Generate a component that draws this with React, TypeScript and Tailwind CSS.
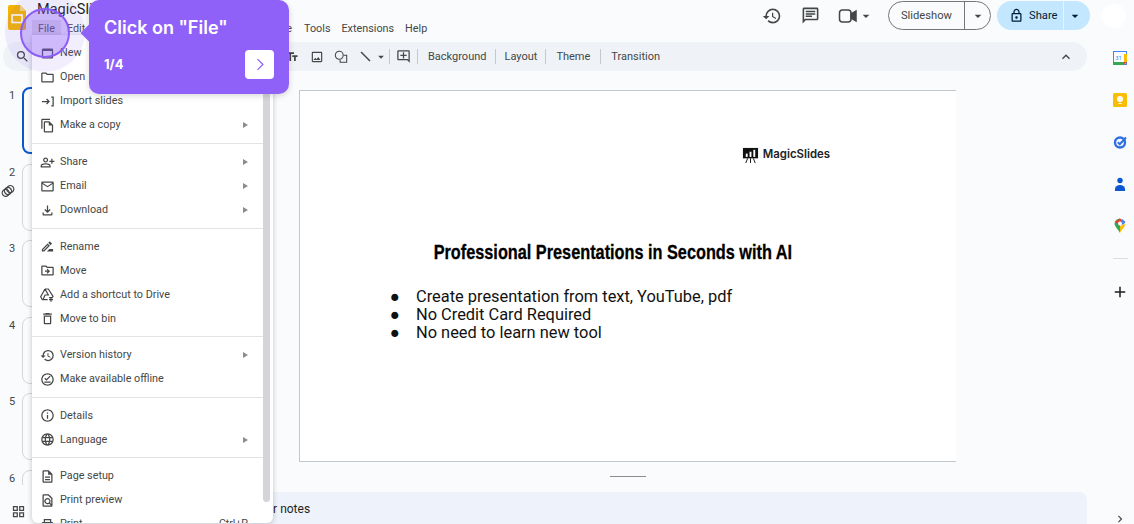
import type { ReactNode } from "react";
import {
  MdAdd,
  MdArrowDropDown,
  MdChevronRight,
  MdHistory,
  MdKeyboardArrowUp,
  MdLanguage,
  MdOutlineAddComment,
  MdOutlineChat,
  MdOutlineDelete,
  MdOutlineDescription,
  MdOutlineDriveFileMove,
  MdOutlineDriveFileRenameOutline,
  MdOutlineEmail,
  MdOutlineFileCopy,
  MdOutlineFileDownload,
  MdOutlineFindInPage,
  MdOutlineFolder,
  MdOutlineGridView,
  MdOutlineImage,
  MdOutlineInfo,
  MdOutlineLock,
  MdOutlineOfflinePin,
  MdOutlinePersonAddAlt,
  MdOutlinePrint,
  MdOutlineWebAsset,
  MdSearch,
  MdTextFields,
} from "react-icons/md";

type Item = { icon: ReactNode; label: string; sub?: boolean; hint?: string };

const ico = "w-[15px] h-[15px]";

function ImportIcon() {
  return (
    <svg viewBox="0 0 24 24" className={ico} fill="none" stroke="currentColor" strokeWidth="2">
      <path d="M3 12h11M10.5 8l4 4-4 4M18 5h3v14h-3" />
    </svg>
  );
}

function ShortcutIcon() {
  return (
    <svg viewBox="0 0 24 24" className="w-[16px] h-[16px]" fill="none" stroke="currentColor" strokeWidth="1.8">
      <path d="M9 3h5l7 11-1 2h-5M9 3L2.5 14.5 5 19h8M9 3l5 9H9l-3 7" />
      <path d="M18 16v6M15 19h6" />
    </svg>
  );
}

const groups: Item[][] = [
  [
    { icon: <MdOutlineWebAsset className={ico} />, label: "New" },
    { icon: <MdOutlineFolder className={ico} />, label: "Open" },
    { icon: <ImportIcon />, label: "Import slides" },
    { icon: <MdOutlineFileCopy className={ico} />, label: "Make a copy", sub: true },
  ],
  [
    { icon: <MdOutlinePersonAddAlt className={ico} />, label: "Share", sub: true },
    { icon: <MdOutlineEmail className={ico} />, label: "Email", sub: true },
    { icon: <MdOutlineFileDownload className={ico} />, label: "Download", sub: true },
  ],
  [
    { icon: <MdOutlineDriveFileRenameOutline className={ico} />, label: "Rename" },
    { icon: <MdOutlineDriveFileMove className={ico} />, label: "Move" },
    { icon: <ShortcutIcon />, label: "Add a shortcut to Drive" },
    { icon: <MdOutlineDelete className={ico} />, label: "Move to bin" },
  ],
  [
    { icon: <MdHistory className={ico} />, label: "Version history", sub: true },
    { icon: <MdOutlineOfflinePin className={ico} />, label: "Make available offline" },
  ],
  [
    { icon: <MdOutlineInfo className={ico} />, label: "Details" },
    { icon: <MdLanguage className={ico} />, label: "Language", sub: true },
  ],
  [
    { icon: <MdOutlineDescription className={ico} />, label: "Page setup" },
    { icon: <MdOutlineFindInPage className={ico} />, label: "Print preview" },
    { icon: <MdOutlinePrint className={ico} />, label: "Print", hint: "Ctrl+P" },
  ],
];

function Sep() {
  return <div className="w-px h-[15px] bg-[#c7c7c7]" />;
}

function FileMenu() {
  return (
    <div className="absolute left-[32px] top-[35px] w-[241px] h-[488px] overflow-hidden bg-white rounded-b-[6px] shadow-[0_1px_5px_rgba(60,64,67,0.3)]">
      <div className="absolute right-[3px] top-0 w-[7px] h-[467px] rounded-full bg-[#d4d5da]" />
      <div className="w-[232px]">
        {groups.map((g, i) => (
          <div key={i} className={i ? "border-t border-[#e3e3e3] pt-[6.25px] pb-[5.25px]" : "pt-[6px] pb-[6px]"}>
            {g.map((it) => (
              <div key={it.label} className="h-[24px] flex items-center pl-[2px] pr-[16px] text-[#444746]">
                <span className="w-[26px] flex justify-center shrink-0">{it.icon}</span>
                <span className="text-[10.8px] flex-1">{it.label}</span>
                {it.sub && <span className="w-0 h-0 border-y-[3px] border-y-transparent border-l-[5px] border-l-[#8a8c8e]" />}
                {it.hint && <span className="text-[10.5px]">{it.hint}</span>}
              </div>
            ))}
          </div>
        ))}
      </div>
    </div>
  );
}

function LinkMark() {
  return (
    <svg viewBox="0 0 14 14" className="w-[14px] h-[14px] mt-[3px] -ml-[8px]" fill="none" stroke="#444746" strokeWidth="1.3">
      <g transform="rotate(-40 7 7)">
        <rect x="0.5" y="3.5" width="7" height="7" rx="3.5" />
        <rect x="3.5" y="3.5" width="7" height="7" rx="3.5" />
        <rect x="6.5" y="3.5" width="7" height="7" rx="3.5" />
      </g>
    </svg>
  );
}

function Thumb({ n, active, linked }: { n: number; active?: boolean; linked?: boolean }) {
  return (
    <div className="h-[76.5px] flex shrink-0">
      <div className="w-[22px] pl-[9px] pt-[1px] text-[11px] text-[#444746]">
        {n}
        {linked && <LinkMark />}
      </div>
      <div className={`w-[240px] h-[67px] rounded-[8px] ${active ? "border-2 border-[#0b57d0]" : "border border-[#d5d7da]"}`} />
    </div>
  );
}

function BulletLine({ text }: { text: string }) {
  return (
    <li className="flex">
      <span className="w-[26px]">●</span>
      {text}
    </li>
  );
}

export default function App() {
  return (
    <div className="relative w-[1134px] h-[524px] overflow-hidden bg-[#f9fbfd] text-[#444746] font-['Roboto',sans-serif]">
      {/* Top bar */}
      <header className="h-[42px] flex">
        <svg viewBox="0 0 18 25" className="w-[18px] h-[25px] ml-[8px] mt-[5px] shrink-0">
          <path d="M2 0h10l6 6v17a2 2 0 0 1-2 2H2a2 2 0 0 1-2-2V2a2 2 0 0 1 2-2z" fill="#f4b400" />
          <path d="M12 0l6 6h-6z" fill="#f8d775" />
          <rect x="4" y="10" width="10" height="7.5" fill="none" stroke="#fff" strokeWidth="1.6" />
        </svg>
        <div className="ml-[11px] flex-1 min-w-0">
          <div className="text-[14.5px] leading-[20px] text-[#1f1f1f] h-[19px]">MagicSlides</div>
          <nav className="flex items-center text-[10.8px] leading-[16px] -ml-[5px] [&>span:not(:first-child)]:pt-[2px]">
            <span className="px-[6px] pt-[1px] mr-[6px] bg-[#e3e3e6]">File</span>
            <span>Edit</span>
            <span className="ml-[169px]">Arrange</span>
            <span className="ml-[12px]">Tools</span>
            <span className="ml-[11px]">Extensions</span>
            <span className="ml-[11px]">Help</span>
          </nav>
        </div>
        <div className="flex items-center h-[31px] shrink-0">
          <MdHistory className="w-[20px] h-[20px] mr-[19px]" />
          <MdOutlineChat className="w-[19px] h-[19px] mr-[18px]" />
          <svg viewBox="0 0 20 16" className="w-[20px] h-[16px] mr-[0.5px]" fill="none" stroke="currentColor" strokeWidth="1.5">
            <rect x="1.5" y="2" width="11.5" height="12" rx="3" />
            <path d="M13 6l5-3v10l-5-3z" fill="currentColor" />
          </svg>
          <MdArrowDropDown className="w-[16px] h-[16px] mr-[14px]" />
          <div className="flex items-center w-[103px] h-[29px] border border-[#747775] rounded-full">
            <span className="w-[75px] pt-[1px] text-center text-[11.2px]">Slideshow</span>
            <span className="w-px h-full bg-[#747775]" />
            <MdArrowDropDown className="w-[16px] h-[16px] ml-[5px]" />
          </div>
          <div className="flex items-center w-[93px] h-[29px] ml-[6px] rounded-full bg-[#c2e7ff] text-[#001d35]">
            <MdOutlineLock className="w-[15px] h-[15px] ml-[12px]" />
            <span className="ml-[5px] pt-[1px] text-[11.2px] w-[34px]">Share</span>
            <span className="w-px h-full bg-[#e3f3ff]" />
            <MdArrowDropDown className="w-[16px] h-[16px] ml-[3px]" />
          </div>
          <div className="w-[24px] h-[24px] ml-[12px] mr-[8px] rounded-full bg-white" />
        </div>
      </header>

      <div className="flex h-[482px]">
        {/* Editor column */}
        <div className="w-[1087px] flex flex-col">
          <div className="ml-[3px] h-[29px] shrink-0 rounded-full bg-[#eff3f8] flex items-center text-[11px] [&>span]:pt-[2px]">
            <MdSearch className="w-[15px] h-[15px] ml-[12px]" />
            <MdTextFields className="w-[14px] h-[14px] ml-[255px]" />
            <MdOutlineImage className="w-[14px] h-[14px] ml-[11px]" />
            <svg viewBox="0 0 16 16" className="w-[14px] h-[14px] ml-[10px]" fill="none" stroke="currentColor" strokeWidth="1.2">
              <circle cx="6" cy="6" r="4.5" />
              <path d="M11 6h3.5v8H7v-3" />
            </svg>
            <svg viewBox="0 0 16 16" className="w-[13px] h-[13px] ml-[11px]" stroke="currentColor" strokeWidth="1.8">
              <path d="M2.5 2.5l11 11" />
            </svg>
            <MdArrowDropDown className="w-[14px] h-[14px] ml-[2px]" />
            <div className="ml-[1px]"><Sep /></div>
            <MdOutlineAddComment className="w-[15px] h-[15px] ml-[6px]" />
            <div className="ml-[6px]"><Sep /></div>
            <span className="ml-[10px]">Background</span>
            <div className="ml-[9px]"><Sep /></div>
            <span className="ml-[8px]">Layout</span>
            <div className="ml-[8px]"><Sep /></div>
            <span className="ml-[10px]">Theme</span>
            <div className="ml-[10px]"><Sep /></div>
            <span className="ml-[10px]">Transition</span>
            <MdKeyboardArrowUp className="w-[16px] h-[16px] ml-auto mr-[13px]" />
          </div>

          <div className="flex flex-1 min-h-0">
            {/* Filmstrip */}
            <div className="w-[273px] shrink-0 flex flex-col">
              <div className="h-[414px] pt-[16px] overflow-hidden">
                {[1, 2, 3, 4, 5, 6].map((n) => (
                  <Thumb key={n} n={n} active={n === 1} linked={n === 2} />
                ))}
              </div>
              <div className="pl-[11px] pt-[19px]">
                <MdOutlineGridView className="w-[15px] h-[15px]" />
              </div>
            </div>

            {/* Canvas */}
            <div className="flex-1 min-w-0 flex flex-col">
              <div className="ml-[26px] mt-[19px] w-[657px] h-[372px] bg-white border-t border-l border-b border-[#c4c7c9] text-black">
                <div className="h-[62px] flex items-end justify-end pr-[126px]">
                  <div className="flex items-center gap-[4px] h-[16px] translate-y-[10px]">
                    <svg viewBox="0 0 18 18" className="w-[17px] h-[17px]">
                      <rect x="1" y="1" width="16" height="11" fill="#111" />
                      <rect x="4" y="7" width="2" height="3.5" fill="#fff" />
                      <rect x="8" y="5" width="2" height="5.5" fill="#fff" />
                      <rect x="12" y="3" width="2" height="7.5" fill="#fff" />
                      <path d="M9 12v5M6 12l-2 5M12 12l2 5" stroke="#111" strokeWidth="1" />
                    </svg>
                    <span className="text-[11.4px] font-semibold text-[#222] font-['Inter',sans-serif]">MagicSlides</span>
                  </div>
                </div>
                <h1 className="mt-[86px] pr-[39px] text-center text-[21px] leading-[26px] font-bold whitespace-nowrap scale-x-[0.775] [-webkit-text-stroke:0.3px_black] font-['Liberation_Sans',sans-serif]">
                  Professional Presentations in Seconds with AI
                </h1>
                <ul className="mt-[23px] ml-[90px] text-[16.4px] leading-[18px] text-[#111]">
                  <BulletLine text="Create presentation from text, YouTube, pdf" />
                  <BulletLine text="No Credit Card Required" />
                  <BulletLine text="No need to learn new tool" />
                </ul>
              </div>
              <div className="ml-[337px] mt-[14px] w-[36px] h-px bg-[#8a8c8e]" />
              <div className="mt-[15px] flex-1 rounded-t-[8px] bg-[#eef3fb] flex items-center text-[12px] text-[#1f1f1f] -ml-[20px]">
                <span className="-ml-[19px] mt-[1px] whitespace-nowrap">Speaker notes</span>
              </div>
            </div>
          </div>
        </div>

        {/* Side rail */}
        <aside className="flex-1 flex flex-col items-center pl-[19px] pt-[9px]">
          <svg viewBox="0 0 14 14" className="w-[14px] h-[14px]">
            <rect width="14" height="14" rx="1" fill="#fff" stroke="#4285f4" strokeWidth="2" />
            <path d="M0 11h11v3H1a1 1 0 0 1-1-1z" fill="#34a853" />
            <path d="M11 3h3v8h-3z" fill="#fbbc04" />
            <path d="M11 11h3l-3 3z" fill="#ea4335" />
            <text x="5.5" y="9" fontSize="6" textAnchor="middle" fill="#4285f4">31</text>
          </svg>
          <svg viewBox="0 0 14 14" className="w-[14px] h-[14px] mt-[28px]">
            <rect width="14" height="14" rx="1.5" fill="#fbbc04" />
            <circle cx="7" cy="6" r="3" fill="#fff" />
            <rect x="5.5" y="10" width="3" height="1" fill="#fff" />
          </svg>
          <svg viewBox="0 0 14 14" className="w-[14px] h-[14px] mt-[28px]" fill="none">
            <circle cx="7" cy="7.5" r="5" stroke="#2f6fe0" strokeWidth="2.4" />
            <path d="M4.8 7.2l2 2L13 2.5" stroke="#2f6fe0" strokeWidth="2" />
          </svg>
          <svg viewBox="0 0 14 14" className="w-[14px] h-[14px] mt-[28px]">
            <circle cx="7" cy="3.5" r="2.7" fill="#0b57d0" />
            <path d="M2 14v-2a5 4 0 0 1 10 0v2z" fill="#0b57d0" />
          </svg>
          <svg viewBox="0 0 12 15" className="w-[12px] h-[15px] mt-[27px]">
            <path d="M6 15C4 11 1 9 0.5 6A5.5 5.5 0 0 1 6 0.5z" fill="#34a853" />
            <path d="M6 15c2-4 5-6 5.5-9L6 8z" fill="#fbbc04" />
            <path d="M1 3.5L6 .5l5 3-2.5 3h-5z" fill="#ea4335" />
            <path d="M8 1l3.5 3L9 7 7 4z" fill="#4285f4" />
            <circle cx="6" cy="5.5" r="2" fill="#fff" />
          </svg>
          <div className="w-[15px] h-px bg-[#dadce0] mt-[25px]" />
          <MdAdd className="w-[18px] h-[18px] mt-[24px] text-[#1f1f1f]" />
          <MdChevronRight className="w-[14px] h-[14px] mt-auto mb-[-2px]" />
        </aside>
      </div>

      {/* Open file menu */}
      <FileMenu />

      {/* Guide highlight */}
      <div className="absolute left-[5px] top-[-8px] w-[80px] h-[80px] rounded-full bg-[#8b5cf6]/10" />
      <div className="absolute left-[20px] top-[8px] w-[50px] h-[50px] rounded-full bg-[#8b5cf6]/35 border-2 border-[#8b5cf6]" />

      {/* Guide tooltip */}
      <div className="absolute left-[89px] top-0 w-[200px] h-[94px] rounded-[10px] bg-[#9061f9] text-white font-['Inter',sans-serif] shadow-[0_2px_6px_rgba(0,0,0,0.15)]">
        <div className="absolute left-[-6px] top-[27px] w-[12px] h-[12px] rotate-45 bg-[#9061f9]" />
        <div className="absolute left-[15px] top-[16px] text-[18px] leading-[24px] font-semibold whitespace-nowrap">Click on "File"</div>
        <div className="absolute left-[15px] top-[55px] text-[13px] leading-[18px] font-bold">1/4</div>
        <div className="absolute left-[156px] top-[50px] w-[29px] h-[29px] rounded-[4px] bg-white flex items-center justify-center text-[#9061f9]">
          <svg viewBox="0 0 12 16" className="w-[10px] h-[15px]" fill="none" stroke="currentColor" strokeWidth="1.5">
            <path d="M3 1.5l6.5 6.5-6.5 6.5" />
          </svg>
        </div>
      </div>
    </div>
  );
}
